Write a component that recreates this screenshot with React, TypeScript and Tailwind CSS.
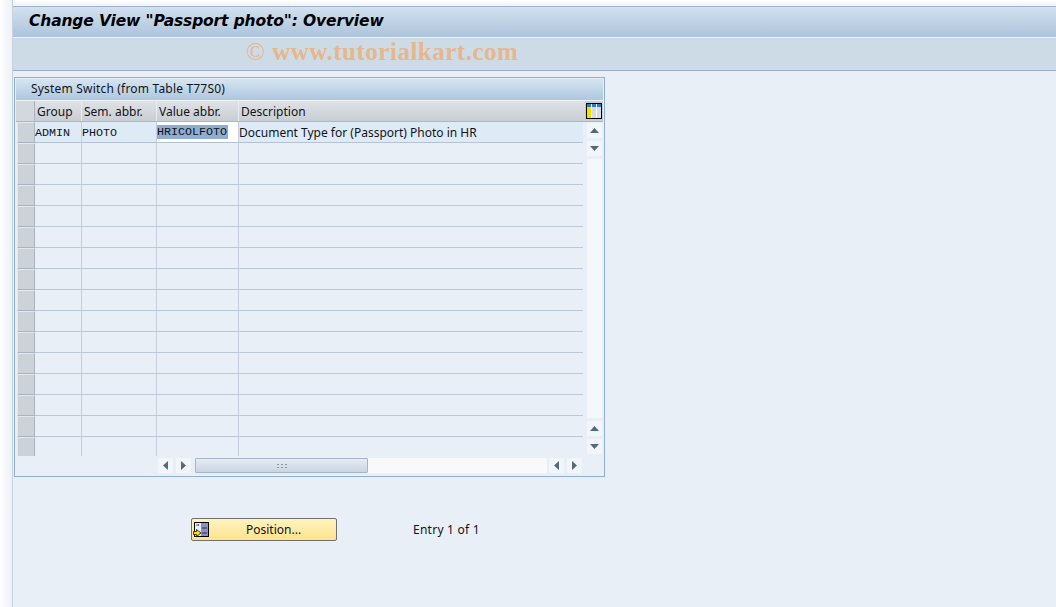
import React from "react";

const rowCount = 16;

const columns = [
    { label: "Group", width: "w-[47px]" },
    { label: "Sem. abbr.", width: "w-[75px]" },
    { label: "Value abbr.", width: "w-[82px]" },
    { label: "Description", width: "w-[346px]" },
];

function ColumnsIcon() {
    return (
        <svg width="16" height="16" viewBox="0 0 16 16" className="block">
            <rect x="0.5" y="0.5" width="15" height="15" fill="#fff" stroke="#000" />
            <rect x="1" y="1" width="14" height="3" fill="#2f7fc0" />
            <rect x="1" y="4" width="4" height="11" fill="#f7e000" />
            <rect x="6" y="4" width="4" height="11" fill="#d5dde6" />
            <rect x="11" y="4" width="4" height="11" fill="#d5dde6" />
            <path d="M5.5 1v14M10.5 1v14" stroke="#fff" />
        </svg>
    );
}

function PositionIcon() {
    return (
        <svg width="16" height="16" viewBox="0 0 16 16" className="block">
            <rect x="1.5" y="0.5" width="14" height="14" fill="#e8ecf4" stroke="#000" />
            <rect x="8" y="1" width="7" height="13" fill="#8c8fc0" />
            <path d="M9 6h5M9 11h5" stroke="#2a2a55" />
            <path d="M3 3h3M5 2l1 1-1 1" stroke="#667" fill="none" />
            <path d="M0.5 9.5h3V7.5l4.5 3.5-4.5 3.5v-2h-3z" fill="#ffe000" stroke="#111" strokeWidth="0.8" />
        </svg>
    );
}

function Arrow({ dir }: { dir: "up" | "down" | "left" | "right" }) {
    const points = {
        up: "0,5 4.5,0 9,5",
        down: "0,0 9,0 4.5,5",
        left: "5,0 5,9 0,4.5",
        right: "0,0 0,9 5,4.5",
    }[dir];
    const vertical = dir === "up" || dir === "down";
    return (
        <svg width={vertical ? 9 : 5} height={vertical ? 5 : 9} className="block">
            <polygon points={points} fill="#55687c" />
        </svg>
    );
}

function ScrollButton({ dir }: { dir: "up" | "down" | "left" | "right" }) {
    return (
        <div className="flex h-[15px] w-[15px] items-center justify-center bg-[#f2f5f9]">
            <Arrow dir={dir} />
        </div>
    );
}

function Selector() {
    return (
        <div className="h-[21px] w-[18px] border border-[#aab4c0] border-t-[#e4e8ec] border-l-[#e4e8ec] bg-[#cdd2d8]" />
    );
}

function DataRow({ first }: { first: boolean }) {
    const cell = "h-full shrink-0 border-r border-[#c6cfdb]";
    const mono = "font-['Liberation_Mono',monospace] text-[11.7px] leading-[22px]";
    const line = first ? "border-b border-b-[#b4c2d4] bg-[#deeaf5]" : "border-b border-b-[#bcc8d8]";
    return (
        <div className={`flex h-[21px] ${line}`}>
            <div className={`${cell} w-[47px] ${mono}`}>{first ? "ADMIN" : ""}</div>
            <div className={`${cell} w-[75px] ${mono}`}>{first ? "PHOTO" : ""}</div>
            <div className={`${cell} w-[82px] ${first ? "bg-white" : ""}`}>
                {first && (
                    <span className="mt-[3px] block h-[14px] w-[71px] bg-[#8fadcf] font-['Liberation_Mono',monospace] text-[11.7px] leading-[15px]">
                        HRICOLFOTO
                    </span>
                )}
            </div>
            <div className="h-full w-[344px] shrink-0 text-[12px] leading-[21px]">
                {first ? "Document Type for (Passport) Photo in HR" : ""}
            </div>
        </div>
    );
}

export default function App() {
    return (
        <div className="flex h-[607px] w-[1056px] overflow-hidden bg-[#e8eff7] font-['Noto_Sans','Open_Sans',sans-serif] text-[#10141c]">
            <div className="h-full w-[12px] shrink-0 border-r border-[#f0f4f8] bg-gradient-to-r from-white to-[#eef2f7]" />
            <div className="flex min-w-0 flex-1 flex-col border-l border-[#c7d2df]">
                <div className="h-[6px] bg-gradient-to-b from-white to-[#eef2f7]" />
                <header className="border-t border-[#a3b3cb]">
                    <div className="flex h-[30px] items-center bg-gradient-to-b from-[#d2e1ee] to-[#adc4db] pl-[16px]">
                        <h1 className="font-['DejaVu_Sans',sans-serif] text-[15.5px] font-bold italic tracking-[-0.14px] text-black">
                            Change View "Passport photo": Overview
                        </h1>
                    </div>
                    <div className="flex h-[34px] items-center border-t border-t-[#edf3f8] border-b border-b-[#9db0c6] bg-[#cddbe7] pb-[4px] pl-[233px]">
                        <span className="font-['Liberation_Serif',serif] text-[25px] font-bold tracking-[0.5px] text-[#e7b78c]">
                            <span className="font-normal">©</span> www.tutorialkart.com
                        </span>
                    </div>
                </header>

                <section className="mt-[6px] ml-[1px] h-[400px] w-[591px] border border-[#8fb0d2] bg-[#e8eff7] p-[1px]">
                    <div className="flex h-[22px] items-center border-b border-[#edf2f6] bg-gradient-to-b from-[#d6e5f2] to-[#aec6de] pb-[2px] pl-[15px] text-[12px] tracking-[0.19px]">
                        System Switch (from Table T77S0)
                    </div>
                    <div className="flex">
                        <div className="w-[569px] shrink-0">
                            <div className="flex h-[21px] border-b border-[#aeb6c0] bg-gradient-to-b from-[#dfe2e6] to-[#c9ced4]">
                                <div className="w-[19px] shrink-0 border-r border-[#aab4c0] bg-[#d4d8dd]" />
                                {columns.map((c) => (
                                    <div
                                        key={c.label}
                                        className={`${c.width} shrink-0 border-r border-[#e9edf1] pl-[2px] text-[12px] leading-[21px] ${c.label === "Description" ? "border-r-0" : ""}`}
                                    >
                                        {c.label}
                                    </div>
                                ))}
                            </div>
                            <div className="flex h-[334px] overflow-hidden">
                                <div className="w-[19px] shrink-0 pl-[1px]">
                                    {Array.from({ length: rowCount }, (_, i) => (
                                        <Selector key={i} />
                                    ))}
                                </div>
                                <div className="w-[548px] shrink-0">
                                    {Array.from({ length: rowCount }, (_, i) => (
                                        <DataRow key={i} first={i === 0} />
                                    ))}
                                </div>
                            </div>
                        </div>
                        <div className="flex w-[18px] shrink-0 flex-col items-center">
                            <div className="flex h-[21px] w-full items-center justify-center border-b border-[#aeb6c0] bg-[#c9ced4]">
                                <ColumnsIcon />
                            </div>
                            <div className="flex flex-col gap-[3px] pt-[1px]">
                                <ScrollButton dir="up" />
                                <ScrollButton dir="down" />
                                <div className="h-[259px] w-[15px] bg-[#f5f8fb]" />
                                <ScrollButton dir="up" />
                                <ScrollButton dir="down" />
                            </div>
                        </div>
                    </div>
                    <div className="mt-[2px] flex h-[15px] items-center pl-[142px]">
                        <ScrollButton dir="left" />
                        <div className="w-[3px]" />
                        <ScrollButton dir="right" />
                        <div className="w-[4px]" />
                        <div className="flex h-[15px] w-[173px] items-center justify-center rounded-[1px] border border-[#a6b6c6] bg-gradient-to-b from-[#e6edf4] to-[#c8d5e2]">
                            <div className="grid grid-cols-3 gap-x-[2px] gap-y-[2px]">
                                {Array.from({ length: 6 }, (_, i) => (
                                    <div key={i} className="h-[1px] w-[2px] bg-[#8c9aa8]" />
                                ))}
                            </div>
                        </div>
                        <div className="h-[15px] w-[179px] bg-[#f7f9fb]" />
                        <div className="w-[2px]" />
                        <ScrollButton dir="left" />
                        <div className="w-[3px]" />
                        <ScrollButton dir="right" />
                    </div>
                </section>

                <div className="mt-[41px] flex items-center pl-[178px]">
                    <button className="flex h-[23px] w-[146px] items-center rounded-[2px] border border-[#6f6f6f] bg-gradient-to-b from-[#fff3c0] to-[#ffe38c] pl-[1px] text-[12px] text-[#10141c]">
                        <PositionIcon />
                        <span className="ml-[37px]">Position...</span>
                    </button>
                    <span className="ml-[76px] text-[12px] tracking-[0.25px]">Entry 1 of 1</span>
                </div>
            </div>
        </div>
    );
}
